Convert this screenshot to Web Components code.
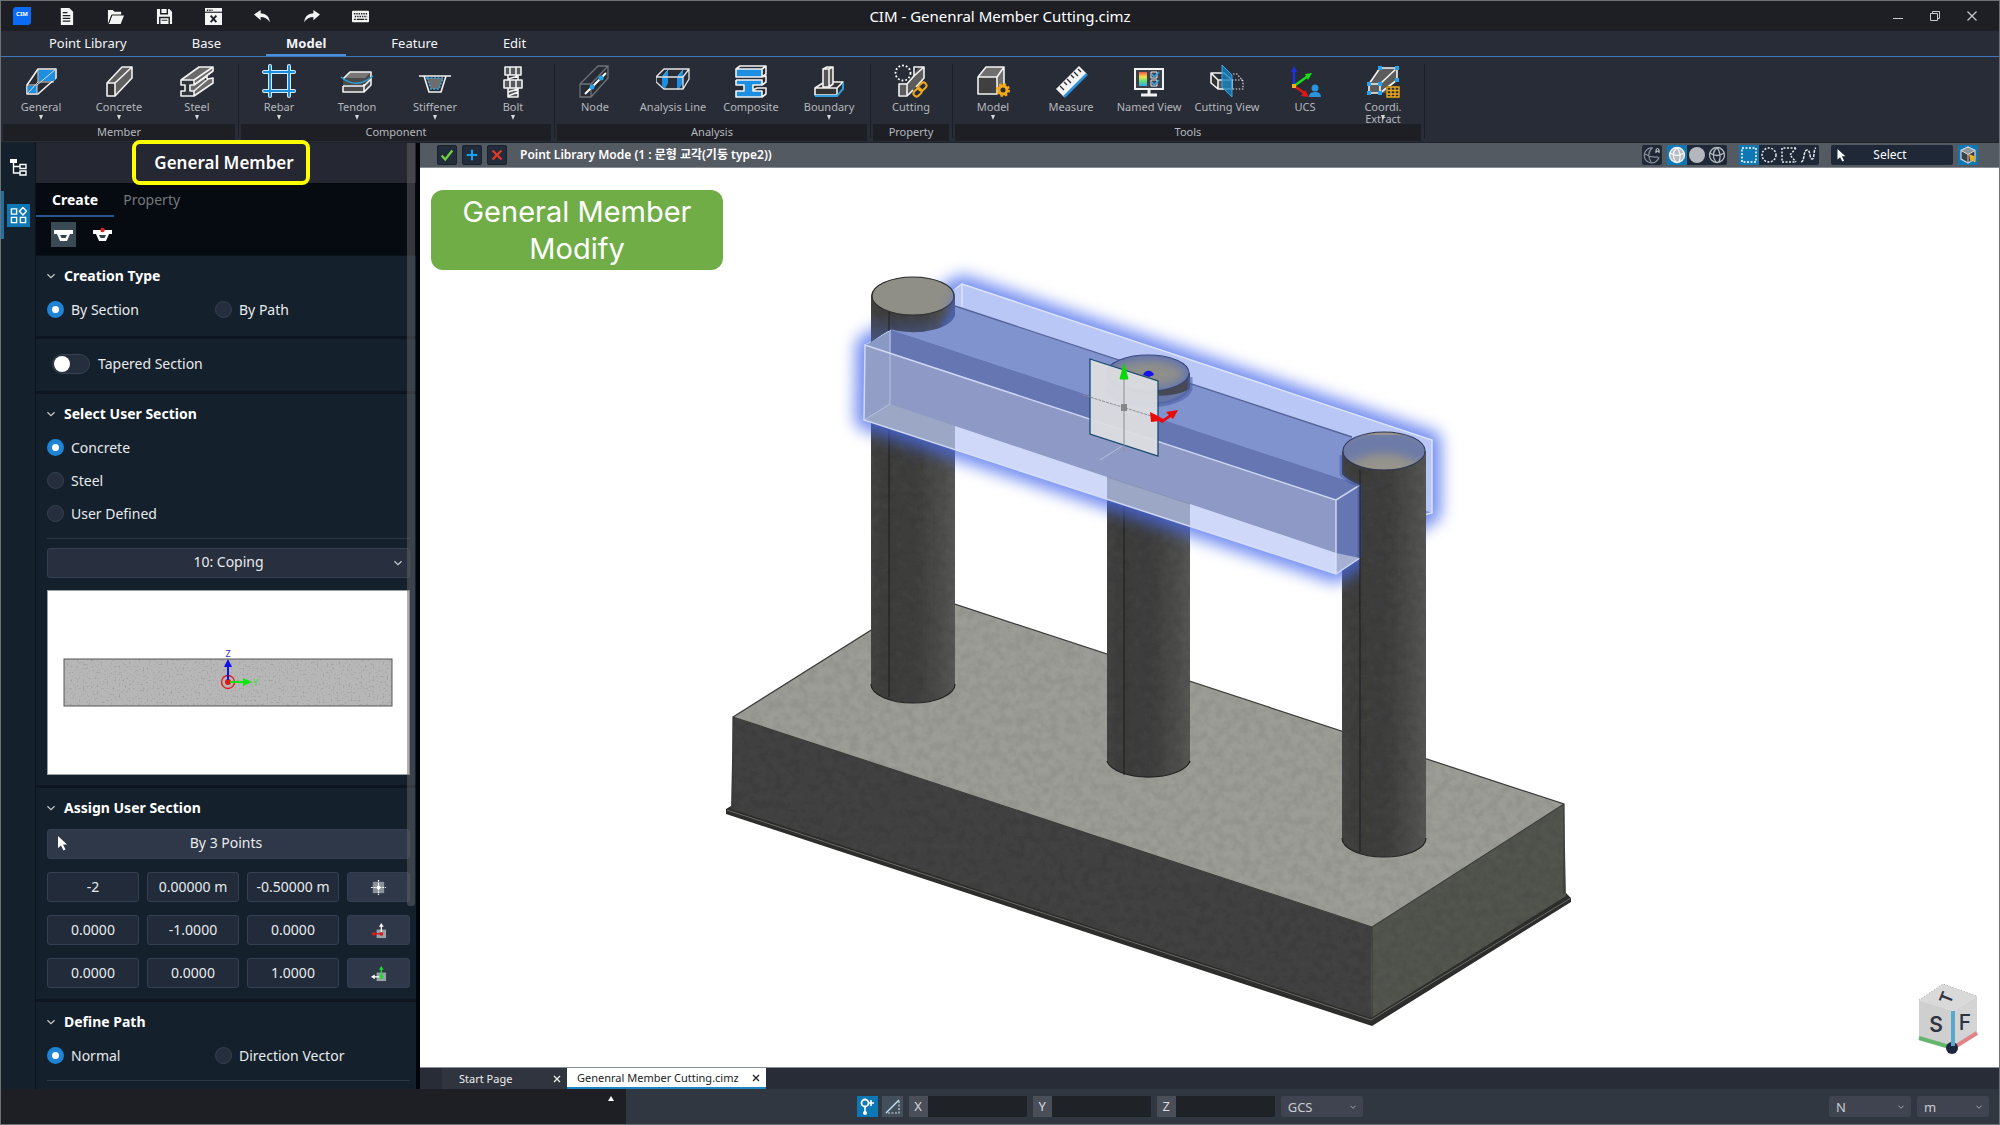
<!DOCTYPE html>
<html lang="en">
    <head>
        <meta charset="UTF-8"/>
        <title>CIM - Genenral Member Cutting.cimz</title>
        <style>
            html, body {
                margin: 0;
                height: 100%;
                background: #1e1f25;
            }
            body {
                font: 14px/20px "Noto Sans", "Noto Sans CJK KR", sans-serif;
                color: #f0f2f4;
            }
        </style>
    </head>
    <body>
        <!-- window frame: title, menu and ribbon on top, work area, status bar -->
        <template id="cim-window-temp">
            <style>
                :host {
                    display: flex;
                    flex-direction: column;
                    box-sizing: border-box;
                    height: 100vh;
                    border: 1px solid #6d7175;
                    overflow: hidden;
                }
                main {
                    display: flex;
                    flex: 1;
                    min-height: 0;
                    border-top: 1px solid #1d2129;
                }
                .work {
                    display: flex;
                    flex-direction: column;
                    flex: 1;
                    min-width: 0;
                }
            </style>
            <slot name="top"></slot>
            <main>
                <slot name="side"></slot>
                <div class="work"><slot></slot></div>
            </main>
            <slot name="bottom"></slot>
        </template>

        <template id="title-bar-temp">
            <style>
                :host {
                    display: grid;
                    grid-template-columns: 1fr auto 1fr;
                    align-items: center;
                    height: 30px;
                    background: #1e1f25;
                }
                .tools, .controls { display: flex; align-items: center; }
                .controls { justify-content: flex-end; padding-right: 9px; }
                .logo { width: 41px; display: flex; justify-content: center; }
                button {
                    display: flex;
                    justify-content: center;
                    width: 49px;
                    padding: 0;
                    border: 0;
                    background: none;
                    color: #f4f4f4;
                }
                .controls button { width: 37px; color: #c8cacc; }
                h1 { margin: 0; font-size: 15px; line-height: 20px; font-weight: 400; color: #fff; }
            </style>
            <div class="tools">
                <span class="logo"><cim-icon name="logo" size="18"></cim-icon></span>
                <button aria-label="New"><cim-icon name="doc" size="17"></cim-icon></button>
                <button aria-label="Open"><cim-icon name="open" size="17"></cim-icon></button>
                <button aria-label="Save"><cim-icon name="save" size="17"></cim-icon></button>
                <button aria-label="Close file"><cim-icon name="closefile" size="17"></cim-icon></button>
                <button aria-label="Undo"><cim-icon name="undo" size="17"></cim-icon></button>
                <button aria-label="Redo"><cim-icon name="redo" size="17"></cim-icon></button>
                <button aria-label="Keyboard"><cim-icon name="keyboard" size="17"></cim-icon></button>
            </div>
            <h1><slot></slot></h1>
            <div class="controls">
                <button aria-label="Minimize"><cim-icon name="min" size="12"></cim-icon></button>
                <button aria-label="Restore"><cim-icon name="restore" size="12"></cim-icon></button>
                <button aria-label="Close"><cim-icon name="close" size="12"></cim-icon></button>
            </div>
        </template>

        <template id="menu-bar-temp">
            <style>
                :host { display: block; background: #282c36; border-bottom: 1px solid #3d77b8; }
                nav { display: flex; gap: 25px; padding-left: 28px; height: 25px; }
                ::slotted(a) {
                    box-sizing: border-box;
                    height: 25px;
                    padding: 0 20px;
                    color: #f4f5f6;
                    font-size: 13px;
                    line-height: 25px;
                    text-decoration: none;
                }
                ::slotted(a[aria-current]) { font-weight: 700; border-bottom: 2px solid #4a8fd8; }
            </style>
            <nav><slot></slot></nav>
        </template>

        <template id="ribbon-bar-temp">
            <style>
                :host { display: flex; padding: 0 1px; background: #282c36; height: 85px; }
            </style>
            <slot></slot>
        </template>

        <template id="ribbon-group-temp">
            <style>
                :host { display: flex; }
                .tools { display: flex; height: 67px; }
                .name {
                    height: 17px;
                    margin: 0 1px;
                    background: #1e1f25;
                    color: #b4b7bc;
                    font-size: 11px;
                    line-height: 16px;
                    text-align: center;
                }
                .line { width: 1px; height: 74px; margin: 7px 1px 0 2px; background: #1b1e25; }
            </style>
            <div>
                <div class="tools"><slot></slot></div>
                <div class="name"></div>
            </div>
            <div class="line"></div>
        </template>

        <template id="ribbon-button-temp">
            <style>
                :host { display: block; }
                button {
                    position: relative;
                    display: flex;
                    flex-direction: column;
                    align-items: center;
                    gap: 3px;
                    width: 78px;
                    height: 67px;
                    padding: 7px 0 0;
                    border: 0;
                    background: none;
                    color: #b4b7bc;
                    font: 11px/12px "Noto Sans", sans-serif;
                    overflow: hidden;
                }
                .arrow { position: absolute; left: 37px; bottom: 4px; display: none; }
                :host([menu]) .arrow { display: block; }
                .arrow {
                    width: 0;
                    border: 2px solid transparent;
                    border-top: 5px solid #d8dadc;
                    border-bottom: 0;
                }
            </style>
            <button>
                <cim-icon size="34"></cim-icon>
                <span><slot></slot></span>
                <i class="arrow"></i>
            </button>
        </template>

        <template id="tool-rail-temp">
            <style>
                :host { display: flex; flex-direction: column; width: 34px; background: #14202c; }
                button {
                    display: flex;
                    align-items: center;
                    justify-content: center;
                    height: 48px;
                    padding: 0;
                    border: 0;
                    background: none;
                    color: #fff;
                }
                button.on { box-shadow: inset 3px 0 #1f6f9f; }
                .on cim-icon { background: #0e78b4; padding: 3px; }
            </style>
            <button aria-label="Tree"><cim-icon name="tree" size="18"></cim-icon></button>
            <button aria-label="Library" class="on"><cim-icon name="library" size="17"></cim-icon></button>
        </template>

        <template id="side-panel-temp">
            <style>
                :host {
                    position: relative;
                    display: block;
                    width: 380px;
                    border-left: 1px solid #0b131b;
                    border-right: 4px solid #02050a;
                    background: #14202c;
                }
                .clip { height: 100%; overflow: hidden; }
                header { display: flex; justify-content: center; height: 40px; padding-right: 4px; background: #252833; border-bottom: 1px solid #05090f; }
                h2 { margin: 0; font-size: 17px; line-height: 39px; font-weight: 600; color: #fff; }
                /* call-out frame round the panel title */
                .mark {
                    position: absolute;
                    left: 96px;
                    top: -3px;
                    box-sizing: border-box;
                    width: 178px;
                    height: 45px;
                    border: 4px solid #ffff00;
                    border-radius: 8px;
                    z-index: 2;
                }
                .scroll {
                    position: absolute;
                    right: 1px;
                    top: 0;
                    width: 8px;
                    height: 763px;
                    border-radius: 0 0 3px 3px;
                    background: rgba(100, 100, 102, .5);
                }
                .dark { background: #060b12; height: 72px; border-bottom: 1px solid #0b131b; box-sizing: border-box; }
                .tabs { display: flex; }
                .tabs button {
                    box-sizing: border-box;
                    height: 33px;
                    padding: 1px 9px 0;
                    border: 0;
                    border-bottom: 2px solid transparent;
                    background: none;
                    color: #74787d;
                    font: 14px/20px "Noto Sans", sans-serif;
                }
                .tabs .on { padding: 1px 16px 0; color: #fff; font-weight: 700; border-color: #2a5590; }
                .modes { display: flex; gap: 14px; padding: 5px 0 0 15px; }
                .modes button { padding: 3px; border: 0; background: none; color: #fff; }
                .modes .on { background: #3a4a54; }
                .modes cim-icon { vertical-align: top; }
            </style>
            <div class="clip">
                <header><h2></h2></header>
                <div class="dark">
                    <div class="tabs"><button class="on">Create</button><button>Property</button></div>
                    <div class="modes">
                        <button class="on" aria-label="Section"><cim-icon name="section" size="19"></cim-icon></button>
                        <button aria-label="Section point"><cim-icon name="sectionpoint" size="19"></cim-icon></button>
                    </div>
                </div>
                <slot></slot>
            </div>
            <div class="mark"></div>
            <div class="scroll"></div>
        </template>

        <template id="panel-section-temp">
            <style>
                :host { display: block; padding: 10px 6px 10px 11px; border-bottom: 3px solid #0c151e; }
                h3 { display: flex; align-items: center; gap: 9px; margin: 0 0 7px; font-size: 14px; line-height: 20px; font-weight: 700; color: #fff; }
                cim-icon { color: #c8ccd0; }
                ::slotted(.rule) { height: 1px; margin: 8px 0 9px; background: #2b3744; }
            </style>
            <h3><cim-icon name="chevron" size="8"></cim-icon><span></span></h3>
            <slot></slot>
        </template>

        <template id="radio-group-temp">
            <style>
                :host { display: grid; grid-template-columns: 1fr; }
                :host([columns="2"]) { grid-template-columns: 168px 1fr; }
                label { display: flex; align-items: center; gap: 7px; height: 33px; color: #e8eaec; }
                input {
                    appearance: none;
                    box-sizing: border-box;
                    width: 17px;
                    height: 17px;
                    margin: 0;
                    border: 1px solid #354150;
                    border-radius: 50%;
                    background: #252e3d;
                }
                input:checked { border: 5px solid #1f84d6; background: #fff; }
            </style>
        </template>

        <template id="toggle-switch-temp">
            <style>
                :host { display: block; padding: 15px 6px 17px 16px; border-bottom: 3px solid #0c151e; }
                label { display: flex; align-items: center; gap: 8px; color: #e8eaec; }
                input {
                    appearance: none;
                    box-sizing: border-box;
                    display: flex;
                    width: 38px;
                    height: 20px;
                    margin: 0;
                    padding: 1px;
                    border: 1px solid #354150;
                    border-radius: 10px;
                    background: #252e3d;
                }
                input::before { content: ""; width: 16px; height: 16px; border-radius: 50%; background: #fff; }
            </style>
            <label><input type="checkbox" role="switch"/><slot></slot></label>
        </template>

        <template id="section-picker-temp">
            <style>
                :host { display: block; }
                .pick { display: grid; align-items: center; margin-bottom: 12px; }
                .pick > * { grid-area: 1 / 1; }
                .pick cim-icon { justify-self: end; margin-right: 8px; color: #c8ccd0; pointer-events: none; }
                select {
                    appearance: none;
                    box-sizing: border-box;
                    width: 100%;
                    height: 30px;
                    padding: 0 4px 2px;
                    border: 1px solid #344052;
                    border-radius: 3px;
                    background: #283040;
                    color: #e8eaec;
                    font: 14px/20px "Noto Sans", sans-serif;
                    text-align-last: center;
                }
                svg { display: block; box-sizing: border-box; width: 100%; height: 185px; background: #fff; border: 1px solid #9a9fa4; }
            </style>
            <div class="pick">
                <select aria-label="Section"><option>10: Coping</option></select>
                <cim-icon name="chevron" size="8"></cim-icon>
            </div>
            <svg viewBox="1 1 361 183">
                <defs>
                    <filter id="grain" x="0" y="0" width="100%" height="100%">
                        <feTurbulence type="fractalNoise" baseFrequency=".5" numOctaves="3" seed="4"/>
                        <feColorMatrix values="0 0 0 0 .25  0 0 0 0 .25  0 0 0 0 .25  2 0 0 0 -1.05"/>
                        <feComposite in2="SourceGraphic" operator="in" result="n"/>
                        <feMerge><feMergeNode in="SourceGraphic"/><feMergeNode in="n"/></feMerge>
                    </filter>
                </defs>
                <rect x="17" y="69" width="328" height="47" fill="#b8b7b7" filter="url(#grain)"/>
                <rect x="17" y="69" width="328" height="47" fill="none" stroke="#555"/>
                <circle cx="181" cy="92" r="6.500" fill="none" stroke="#e01818" stroke-width="1.300"/>
                <circle cx="181" cy="92" r="3" fill="#e01818"/>
                <path d="M183 92H199" stroke="#0ee60e" stroke-width="2"/><path d="M196 88L205 92L196 96Z" fill="#0ee60e"/>
                <path d="M181 90V76" stroke="#1010e8" stroke-width="2"/><path d="M177 77L181 69L185 77Z" fill="#1010e8"/>
                <text x="181" y="67" font-size="9" text-anchor="middle" fill="#3030d0">Z</text>
                <text x="206" y="96" font-size="9" fill="#3fdc3f">Y</text>
            </svg>
        </template>

        <template id="point-form-temp">
            <style>
                :host { display: grid; grid-template-columns: repeat(3, 1fr) 63px; gap: 13px 8px; margin: 11px 0 1px; }
                input, button {
                    box-sizing: border-box;
                    width: 100%;
                    min-width: 0;
                    height: 30px;
                    border: 1px solid #344052;
                    border-radius: 3px;
                    background: #222b3a;
                    color: #e8eaec;
                    font: 14px/20px "Noto Sans", sans-serif;
                    text-align: center;
                    padding: 0 0 2px;
                }
                button { display: flex; align-items: center; justify-content: center; padding: 0; background: #2f3849; }
                .wide { grid-column: 1 / -1; display: grid; grid-template-columns: 16px 1fr 20px; padding: 0 7px 2px 6px; }
            </style>
            <button class="wide"><cim-icon name="cursor" size="16"></cim-icon><span>By 3 Points</span></button>
            <input aria-label="Origin X" value="-2"/>
            <input aria-label="Origin Y" value="0.00000 m"/>
            <input aria-label="Origin Z" value="-0.50000 m"/>
            <button aria-label="Pick origin"><cim-icon name="origin" size="17"></cim-icon></button>
            <input aria-label="Axis 1 X" value="0.0000"/>
            <input aria-label="Axis 1 Y" value="-1.0000"/>
            <input aria-label="Axis 1 Z" value="0.0000"/>
            <button aria-label="Pick first axis"><cim-icon name="axisred" size="17"></cim-icon></button>
            <input aria-label="Axis 2 X" value="0.0000"/>
            <input aria-label="Axis 2 Y" value="0.0000"/>
            <input aria-label="Axis 2 Z" value="1.0000"/>
            <button aria-label="Pick second axis"><cim-icon name="axisgreen" size="17"></cim-icon></button>
        </template>

        <template id="view-bar-temp">
            <style>
                :host { display: flex; align-items: center; gap: 5px; height: 25px; padding: 0 21px 0 17px; background: #545a62; border-bottom: 1px solid #8a8f95; box-sizing: border-box; }
                button { display: flex; padding: 0; border: 0; background: none; }
                .ok { border: 1px solid #18202c; border-radius: 2px; background: #232c3a; padding: 1px; }
                .name { flex: 1; padding-left: 8px; font-size: 12px; line-height: 20px; font-weight: 600; color: #fff; }
                .set { display: flex; height: 20px; border-radius: 2px; background: #1f2837; }
                .set .on, .cube { background: #0e78b4; }
                .shade { margin-right: 7px; }
                .shape { margin-right: 7px; }
                .mode { display: grid; grid-template-columns: 16px 1fr 20px; align-items: center; width: 122px; height: 20px; padding: 0 3px; border-radius: 2px; background: #1f2837; color: #fff; font: 12px/20px "Noto Sans", sans-serif; box-sizing: border-box; }
            </style>
            <button class="ok" aria-label="Apply"><cim-icon name="check" size="16"></cim-icon></button>
            <button class="ok" aria-label="Add"><cim-icon name="plus" size="16"></cim-icon></button>
            <button class="ok" aria-label="Cancel"><cim-icon name="cross" size="16"></cim-icon></button>
            <span class="name"><slot></slot></span>
            <span class="set"><button aria-label="Auto view"><cim-icon name="globeauto" size="20"></cim-icon></button></span>
            <span class="set shade">
                <button class="on" aria-label="Shaded with lines"><cim-icon name="globefull" size="20"></cim-icon></button>
                <button aria-label="Shaded"><cim-icon name="ball" size="20"></cim-icon></button>
                <button aria-label="Wireframe"><cim-icon name="globe" size="20"></cim-icon></button>
            </span>
            <span class="set shape">
                <button class="on" aria-label="Box select"><cim-icon name="selbox" size="20"></cim-icon></button>
                <button aria-label="Circle select"><cim-icon name="selcircle" size="20"></cim-icon></button>
                <button aria-label="Polygon select"><cim-icon name="selpoly" size="20"></cim-icon></button>
                <button aria-label="Line select"><cim-icon name="selline" size="20"></cim-icon></button>
            </span>
            <button class="mode"><cim-icon name="cursor" size="14"></cim-icon><span>Select</span></button>
            <button class="cube" aria-label="Solid pick"><cim-icon name="solid" size="20"></cim-icon></button>
        </template>

        <template id="model-view-temp">
            <style>
                :host { position: relative; display: block; flex: 1; min-height: 0; background: #fff; border-bottom: 1px solid #8a8f95; }
                svg { display: block; width: 100%; height: 100%; }
                .note {
                    position: absolute;
                    left: 11px;
                    top: 22px;
                    box-sizing: border-box;
                    width: 292px;
                    height: 80px;
                    padding: 3px 0;
                    border-radius: 12px;
                    background: #70ad47;
                    color: #fff;
                    font: 400 29px/37px Inter, sans-serif;
                    text-align: center;
                }
            </style>
            <svg viewBox="420 167 1579 899" aria-label="Pier model">
                <defs>
                    <filter id="glow" x="-10%" y="-20%" width="120%" height="140%"><feGaussianBlur stdDeviation="8"/></filter>
                    <filter id="soft" x="-30%" y="-30%" width="160%" height="160%"><feGaussianBlur stdDeviation="5"/></filter>
                    <filter id="grain" x="0" y="0" width="100%" height="100%">
                        <feTurbulence type="fractalNoise" baseFrequency=".12" numOctaves="4" seed="7"/>
                        <feColorMatrix values="0 0 0 0 0  0 0 0 0 0  0 0 0 0 0  .3 0 0 0 -.1"/>
                        <feComposite in2="SourceGraphic" operator="in" result="n"/>
                        <feMerge><feMergeNode in="SourceGraphic"/><feMergeNode in="n"/></feMerge>
                    </filter>
                    <linearGradient id="col">
                        <stop offset="0" stop-color="#444443"/><stop offset=".22" stop-color="#3e3e3d"/>
                        <stop offset=".6" stop-color="#424241"/><stop offset="1" stop-color="#575755"/>
                    </linearGradient>
                    <linearGradient id="neck" x2="0" y2="1">
                        <stop offset=".55" stop-color="#4a62b0" stop-opacity="0"/><stop offset="1" stop-color="#4a62b0" stop-opacity=".6"/>
                    </linearGradient>
                    <clipPath id="cap3"><ellipse cx="1384" cy="450" rx="41" ry="19"/></clipPath>
                    <clipPath id="cap2"><ellipse cx="1148" cy="372" rx="41" ry="18"/></clipPath>
                    <clipPath id="cap1"><path d="M871 295A42 19 0 0 1 955 295V312A42 19 0 0 1 890 328L871 341Z"/></clipPath>
                </defs>

                <!-- footing -->
                <path d="M726 808L731 805L1371 1014L1566 892L1571 897V901L1372 1025L726 813Z" fill="#2d2e2b"/>
                <path d="M727 809L1371 1019L1571 897" fill="none" stroke="#6a6b66"/>
                <path d="M733 716L1372 926L1371 1017L731 808Z" fill="#424242" filter="url(#grain)"/>
                <path d="M1372 926L1564 803L1566 895L1371 1017Z" fill="#535450" filter="url(#grain)"/>
                <path d="M733 716L927 594L1564 803L1372 926Z" fill="#9c9d96" filter="url(#grain)"/>
                <path d="M733 716L927 594L1564 803V893M1564 803L1372 926V1017M1372 926L733 716V808" fill="none" stroke="#3a3b38" stroke-width="1.200"/>

                <!-- piers -->
                <g filter="url(#grain)" fill="url(#col)">
                    <path d="M871 295V683A42 19 0 0 0 955 683V295Z"/>
                    <path d="M1107 372V760A42 19 0 0 0 1190 760V372Z"/>
                    <path d="M1342 450V837A42 19 0 0 0 1426 837V450Z"/>
                </g>
                <g fill="none" stroke="#222" stroke-width="1.200">
                    <path d="M889 330V696M1124 470V774M1360 560V851"/>
                    <path d="M871 683A42 19 0 0 0 955 683M1107 760A42 19 0 0 0 1190 760M1342 837A42 19 0 0 0 1426 837"/>
                </g>

                <!-- selection halo -->
                <path d="M865 344L890 329L962 283L1432 439V512L1360 557L1336 573L864 419Z" fill="#4a6cec" stroke="#4a6cec" stroke-width="18" stroke-linejoin="round" opacity=".78" filter="url(#glow)"/>

                <!-- coping, beam and its selection box -->
                <path d="M891 329L962 283L1432 439V512L1360 484Z" fill="#b9c7f6"/>
                <path d="M891 329L935 299L955 305L1352 436L1360 484Z" fill="#8193cf"/>
                <path d="M865 344L891 329L1360 484V557L1336 573L864 419Z" fill="#6676b3"/>
                <path d="M865 344L891 329L890 403L864 419Z" fill="#8a98c4"/>
                <path d="M865 344L1336 499V573L864 419Z" fill="#929ec6" opacity=".9"/>
                <path d="M955 425L1336 552V573L864 419L890 403Z" fill="#9ca7c6"/>
                <path d="M955 425L1107 476V498L955 449Z" fill="#cfd8f9"/>
                <path d="M1190 503L1336 552V573L1190 525Z" fill="#cfd8f9"/>
                <path d="M1107 476L1190 503" stroke="#8792b4"/>
                <path d="M1336 552L1360 557L1336 573Z" fill="#a5b0d2"/>
                <path d="M955 305L1352 436" stroke="#56659a" stroke-width="1.400"/>
                <path d="M864 419L890 403M890 403V330" stroke="#b4c0e6" fill="none"/>
                <g fill="none" stroke="#dbe3fd" stroke-width="1.500">
                    <path d="M865 344L1336 499V573L864 419ZM1336 499L1360 484M1336 573L1360 557" opacity=".85"/>
                    <path d="M955 288L962 283V306M962 283L1432 439V512L1424 514"/>
                </g>
                <path d="M865 344L891 329" stroke="#c2cdf2"/>

                <!-- pier heads -->
                <g filter="url(#grain)">
                    <path d="M871 295A42 19 0 0 1 955 295V312A42 19 0 0 1 890 328L871 341Z" fill="url(#col)"/>
                </g>
                <path d="M871 295A42 19 0 0 1 955 295V312A42 19 0 0 1 890 328L871 341Z" fill="url(#neck)"/>
                <ellipse cx="913" cy="295" rx="41" ry="19" fill="#8f8e87" stroke="#2f302e" stroke-width="1.200"/>
                <g clip-path="url(#cap1)"><path d="M962 275L940 330H962Z" fill="#4a6cf0" opacity=".6" filter="url(#soft)"/></g>
                <path d="M889 311V330" stroke="#222"/>

                <path d="M1107 372V388A42 19 0 0 0 1190 388V372Z" fill="#6676a8"/>
                <path d="M1130 390A42 19 0 0 0 1190 388V372L1150 380Z" fill="#474a55"/>
                <path d="M1107 388A42 19 0 0 0 1190 388V376" fill="none" stroke="#4d60a8" stroke-width="5" opacity=".6"/>
                <ellipse cx="1148" cy="372" rx="41" ry="18" fill="#8f8f8c" stroke="#37406a" stroke-width="1.200"/>
                <g clip-path="url(#cap2)"><ellipse cx="1148" cy="373" rx="44" ry="21" fill="none" stroke="#4462c4" stroke-width="14" opacity=".6" filter="url(#soft)"/></g>

                <g filter="url(#grain)">
                    <path d="M1342 450V473Q1348 480 1360 484V612H1426V450Z" fill="url(#col)"/>
                </g>
                <path d="M1342 454V473Q1348 480 1360 484V557" fill="none" stroke="#33488a" stroke-width="5" opacity=".4"/>
                <path d="M1360 469V612" stroke="#222"/>
                <ellipse cx="1384" cy="450" rx="41" ry="19" fill="#96948c" stroke="#2f3550" stroke-width="1.200"/>
                <g clip-path="url(#cap3)"><path d="M1342 460A41 19 0 0 1 1426 460" fill="none" stroke="#4462c4" stroke-width="24" opacity=".5" filter="url(#soft)"/></g>

                <!-- work plane -->
                <path d="M1090 358L1158 380V455L1090 433Z" fill="#dcdde0" fill-opacity=".95" stroke="#174a6e" stroke-width="1.300"/>
                <path d="M1124 370V451" stroke="#8b8e92"/>
                <path d="M1083 394L1158 417" stroke="#8b8e92" stroke-dasharray="3 1"/>
                <path d="M1122 445L1100 459" stroke="#b6bed8"/>
                <rect x="1121" y="403" width="6" height="7" fill="#85878a"/>
                <path d="M1124 363L1128 378H1120Z" fill="#08d808" stroke="#08d808"/>
                <path d="M1143 374A6 7 0 0 1 1154 374L1149 376Z" fill="#1414e6"/>
                <path d="M1150 411L1158 415L1163 418L1169 414L1166 411L1178 409L1173 418L1171 416L1162 422L1159 420L1151 421Z" fill="#ec0808"/>

                <!-- view cube -->
                <path d="M1919 999L1943 983L1977 995L1953 1010Z" fill="#d9d9da"/>
                <path d="M1919 999L1953 1010V1047L1919 1037Z" fill="#cfcfd0"/>
                <path d="M1977 995L1953 1010V1047L1977 1032Z" fill="#d4d4d5"/>
                <path d="M1919 999L1943 983L1977 995" fill="none" stroke="#aaa" stroke-dasharray="1 2"/>
                <path d="M1919 1037L1953 1047" stroke="#66b56c" stroke-width="4"/>
                <path d="M1953 1047L1977 1032" stroke="#e08488" stroke-width="4"/>
                <circle cx="1952" cy="1047" r="6" fill="#1d2740"/>
                <path d="M1953 1010V1045" stroke="#55a9cc" stroke-width="4"/>
                <g fill="#2e3340" font-family="Inter, sans-serif" font-weight="600" font-size="21" text-anchor="middle">
                    <text x="1936" y="1031">S</text>
                    <text x="1965" y="1029" font-weight="500">F</text>
                    <text font-size="17" transform="translate(1952 999) rotate(-68)">T</text>
                </g>
            </svg>
            <div class="note"><slot></slot></div>
        </template>

        <template id="doc-tabs-temp">
            <style>
                :host { display: flex; height: 21px; padding-left: 22px; background: #282c36; }
                .tab { display: flex; align-items: center; justify-content: space-between; box-sizing: border-box; width: 125px; padding: 0 6px 0 17px; background: #2f343e; }
                .tab.on { width: 199px; padding: 0 6px 0 10px; background: #fff; border-bottom: 2px solid #1a86c4; }
                .tab button { padding: 0; border: 0; background: none; color: #eee; font: 11px/18px "Noto Sans", sans-serif; }
                .tab.on button { color: #222; }
            </style>
            <div class="tab"><button>Start Page</button><button aria-label="Close Start Page"><cim-icon name="x" size="8"></cim-icon></button></div>
            <div class="tab on"><button>Genenral Member Cutting.cimz</button><button aria-label="Close file tab"><cim-icon name="x" size="8"></cim-icon></button></div>
        </template>

        <template id="status-bar-temp">
            <style>
                :host { display: flex; height: 35px; background: #313740; }
                .log { box-sizing: border-box; width: 625px; padding: 7px 12px; background: #1e1f25; text-align: right; }
                .log button { display: inline-block; width: 0; height: 0; padding: 0; border: 3px solid transparent; border-bottom: 5px solid #fff; border-top: 0; background: none; vertical-align: top; }
                .gap { flex: 1; }
                .gap.far { flex: 2; }
                .row { display: flex; align-items: flex-start; gap: 6px; padding: 7px 10px 0 0; }
                .row.mid { padding-right: 5px; }
                .row > button { display: flex; margin-right: -2px; padding: 0; border: 0; background: #0e78b4; }
                .row > button + button { margin-right: 0; background: #43505b; }
                label { display: flex; font-size: 13px; line-height: 21px; text-align: center; }
                label span { width: 19px; background: #494e59; color: #d8dadd; }
                input { box-sizing: border-box; width: 99px; height: 21px; border: 0; background: #1f2328; color: #fff; }
                .pick { display: grid; align-items: center; }
                .pick > * { grid-area: 1 / 1; }
                .pick cim-icon { justify-self: end; margin-right: 7px; color: #aeb3ba; pointer-events: none; }
                select { appearance: none; width: 82px; height: 21px; padding: 0 7px; border: 0; border-radius: 2px; background: #3f4450; color: #c9ccd2; font: 13px/20px "Noto Sans", sans-serif; }
                .short select { width: 72px; }
            </style>
            <div class="log"><button aria-label="Expand log"></button></div>
            <div class="gap"></div>
            <div class="row mid">
                <button aria-label="Snap"><cim-icon name="snap" size="21"></cim-icon></button>
                <button aria-label="Ortho"><cim-icon name="ortho" size="21"></cim-icon></button>
                <label><span>X</span><input/></label>
                <label><span>Y</span><input/></label>
                <label><span>Z</span><input/></label>
                <div class="pick"><select aria-label="Coordinate system"><option>GCS</option></select><cim-icon name="chevron" size="6"></cim-icon></div>
            </div>
            <div class="gap far"></div>
            <div class="row">
                <div class="pick"><select aria-label="Force unit"><option>N</option></select><cim-icon name="chevron" size="6"></cim-icon></div>
                <div class="pick short"><select aria-label="Length unit"><option>m</option></select><cim-icon name="chevron" size="6"></cim-icon></div>
            </div>
        </template>

        <cim-window>
            <title-bar slot="top">CIM - Genenral Member Cutting.cimz</title-bar>
            <menu-bar slot="top">
                <a href="#library">Point Library</a>
                <a href="#base">Base</a>
                <a href="#model" aria-current="page">Model</a>
                <a href="#feature">Feature</a>
                <a href="#edit">Edit</a>
            </menu-bar>
            <ribbon-bar slot="top">
                <ribbon-group name="Member">
                    <ribbon-button icon="general" menu>General</ribbon-button>
                    <ribbon-button icon="concrete" menu>Concrete</ribbon-button>
                    <ribbon-button icon="steel" menu>Steel</ribbon-button>
                </ribbon-group>
                <ribbon-group name="Component">
                    <ribbon-button icon="rebar" menu>Rebar</ribbon-button>
                    <ribbon-button icon="tendon" menu>Tendon</ribbon-button>
                    <ribbon-button icon="stiffener" menu>Stiffener</ribbon-button>
                    <ribbon-button icon="bolt" menu>Bolt</ribbon-button>
                </ribbon-group>
                <ribbon-group name="Analysis">
                    <ribbon-button icon="node">Node</ribbon-button>
                    <ribbon-button icon="analysis">Analysis Line</ribbon-button>
                    <ribbon-button icon="composite">Composite</ribbon-button>
                    <ribbon-button icon="boundary" menu>Boundary</ribbon-button>
                </ribbon-group>
                <ribbon-group name="Property">
                    <ribbon-button icon="cutting">Cutting</ribbon-button>
                </ribbon-group>
                <ribbon-group name="Tools">
                    <ribbon-button icon="model" menu>Model</ribbon-button>
                    <ribbon-button icon="measure">Measure</ribbon-button>
                    <ribbon-button icon="named">Named View</ribbon-button>
                    <ribbon-button icon="cutview">Cutting View</ribbon-button>
                    <ribbon-button icon="ucs">UCS</ribbon-button>
                    <ribbon-button icon="extract" menu>Coordi.<br/>Extract</ribbon-button>
                </ribbon-group>
            </ribbon-bar>

            <tool-rail slot="side"></tool-rail>
            <side-panel slot="side" heading="General Member">
                <panel-section heading="Creation Type">
                    <radio-group columns="2" options="By Section,By Path"></radio-group>
                </panel-section>
                <toggle-switch>Tapered Section</toggle-switch>
                <panel-section heading="Select User Section">
                    <radio-group options="Concrete,Steel,User Defined"></radio-group>
                    <div class="rule"></div>
                    <section-picker></section-picker>
                </panel-section>
                <panel-section heading="Assign User Section">
                    <point-form></point-form>
                </panel-section>
                <panel-section heading="Define Path">
                    <radio-group columns="2" options="Normal,Direction Vector"></radio-group>
                    <div class="rule"></div>
                </panel-section>
            </side-panel>

            <view-bar>Point Library Mode (1 : 문형 교각(기둥 type2))</view-bar>
            <model-view>General Member<br/>Modify</model-view>
            <doc-tabs></doc-tabs>

            <status-bar slot="bottom"></status-bar>
        </cim-window>

        <script>
            // icon drawings: [view box size, markup]
            const W = 'fill="none" stroke="#f2f2f2" stroke-width="1.600" stroke-linejoin="round"';
            const GLOBE = '<circle cx="10" cy="10" r="7.500"/><path d="M3 8Q10 13 17 8M10 2.500Q3 9 9 17.500M10 2.500Q15 9 12 17"/>';
            const SECTION = '<path d="M0 5H19V9H16L13 16H6L3 9H0Z" fill="#fff"/><path d="M6 10H13L11.500 13H7.500Z" fill="#33424c"/>';
            const ICONS = {
                logo: [18, '<path d="M2 0H18V16L16 18H0V2Z" fill="#0a6cf2"/><text x="9" y="9" font-size="6" font-weight="700" font-family="Noto Sans" text-anchor="middle" fill="#fff">CIM</text>'],
                doc: [18, '<path d="M3 0H12L16 4V18H3Z" fill="#f4f4f4"/><path d="M5 5H10M5 8H13M5 11H13M5 14H13" stroke="#1e1f25" stroke-width="1.300"/>'],
                open: [18, '<path d="M1 17V2H6L8 4H15V7H5Z" fill="#f4f4f4"/><path d="M5.500 8H18L14.500 17H2Z" fill="#f4f4f4"/><path d="M5 7.500L2 16" stroke="#1e1f25"/>'],
                save: [18, '<path d="M1 1H14L17 4V17H1Z" fill="#f4f4f4"/><path d="M5 1V6H12V1M4 17V10H14V17" fill="none" stroke="#1e1f25" stroke-width="1.500"/><path d="M6 13H12" stroke="#1e1f25"/>'],
                closefile: [18, '<path d="M0 0H18V18H0Z" fill="#f4f4f4"/><path d="M0 4.500H18" stroke="#1e1f25" stroke-width="1.200"/><path d="M2 2.300H8" stroke="#1e1f25" stroke-width="1.500" stroke-dasharray="1.500 1"/><path d="M6 8L12 15M12 8L6 15" stroke="#1e1f25" stroke-width="2"/>'],
                undo: [18, '<path d="M0 7L7 2V5.500Q16 6 17 15Q13 9.500 7 9.500V13Z" fill="#f4f4f4"/>'],
                redo: [18, '<path d="M18 7L11 2V5.500Q2 6 1 15Q5 9.500 11 9.500V13Z" fill="#f4f4f4"/>'],
                keyboard: [18, '<rect y="3" width="18" height="12" rx="1" fill="#f4f4f4"/><path d="M2 6H16M3 9H16" stroke="#1e1f25" stroke-width="1.600" stroke-dasharray="1.500 1"/><path d="M2 12H4M5 12H13M14 12H16" stroke="#1e1f25" stroke-width="1.500"/>'],
                min: [12, '<path d="M1 8.500H11" stroke="currentColor"/>'],
                restore: [12, '<path d="M1.500 3.500H8.500V10.500H1.500ZM3.500 3V1.500H10.500V8.500H9" fill="none" stroke="currentColor"/>'],
                close: [12, '<path d="M1.500 1.500L10.500 10.500M10.500 1.500L1.500 10.500" stroke="currentColor" stroke-width="1.200"/>'],
                x: [8, '<path d="M1 1L7 7M7 1L1 7" stroke="currentColor" stroke-width="1.300"/>'],
                chevron: [9, '<path d="M.5 2.500L4.500 6.500L8.500 2.500" fill="none" stroke="currentColor" stroke-width="1.300"/>'],
                cursor: [16, '<path d="M4 1V13L7 10.500L9.500 15.500L11.500 14.500L9 9.500H13Z" fill="#fff"/>'],
                tree: [18, '<path d="M1 1H8V5H1Z" fill="#fff"/><path d="M4.500 5V15H11M4.500 8.500H11M11 6.500H17V10.500H11ZM11 13H17V17H11Z" fill="none" stroke="#fff" stroke-width="1.400"/>'],
                library: [18, '<path d="M1.500 2H7V7.500H1.500ZM1.500 11H7V16.500H1.500ZM11 11H16.500V16.500H11ZM13.700 .5L17.500 4.500L13.700 8.500L10 4.500Z" fill="none" stroke="#fff" stroke-width="1.500"/>'],
                section: [19, SECTION],
                sectionpoint: [19, SECTION + '<circle cx="9.500" cy="5" r="2.200" fill="#e02020"/>'],
                origin: [18, '<path d="M3 3H15V15H3Z" fill="#8b929c"/><path d="M9 1V17M1 9H17" stroke="#fff" stroke-width="1.300" stroke-dasharray="2 1"/><circle cx="9" cy="9" r="2" fill="#fff"/>'],
                axisred: [18, '<path d="M7 8H17V17H7Z" fill="#9aa0a8"/><path d="M12 12V4" stroke="#fff" stroke-width="1.400"/><path d="M9.500 5L12 1L14.500 5Z" fill="#fff"/><path d="M12 12.500H4" stroke="#d81c1c" stroke-width="1.600"/><path d="M5 10L1 12.500L5 15Z" fill="#d81c1c"/><circle cx="12" cy="12.500" r="2" fill="#d81c1c"/>'],
                axisgreen: [18, '<path d="M7 8H17V17H7Z" fill="#9aa0a8"/><path d="M12 12V4" stroke="#19dc28" stroke-width="1.600"/><path d="M9.500 5L12 1L14.500 5Z" fill="#19dc28"/><path d="M12 12.500H4" stroke="#fff" stroke-width="1.400"/><path d="M5 10L1 12.500L5 15Z" fill="#fff"/><circle cx="12" cy="12.500" r="2.200" fill="#19dc28"/>'],
                check: [18, '<path d="M3 9.500L7 14L15 4" fill="none" stroke="#6fd044" stroke-width="2.600"/>'],
                plus: [18, '<path d="M9 3V15M3 9H15" stroke="#18a0ee" stroke-width="2.400"/>'],
                cross: [18, '<path d="M4 4L14 14M14 4L4 14" stroke="#e33a28" stroke-width="2.600"/>'],
                globeauto: [20, '<g fill="none" stroke="#8c929b" stroke-width="1.200"><path d="M11 3A7.500 7.500 0 1 0 17 12M3 9Q9 13 16 12M10 3Q4 9 9 17"/></g><path d="M14 8V4.500Q15.500 2.500 17 4.500V8M14 6.200H17" fill="none" stroke="#ddd"/>'],
                globefull: [20, '<g fill="#b7bcc2" stroke="#f4f4f4" stroke-width="1.300">' + GLOBE + '</g>'],
                ball: [20, '<circle cx="10" cy="10" r="8" fill="#b4b8be"/>'],
                globe: [20, '<g fill="none" stroke="#b4b8be" stroke-width="1.300">' + GLOBE + '</g>'],
                selbox: [20, '<path d="M3 3H17V17H3Z" fill="none" stroke="#fff" stroke-width="1.500" stroke-dasharray="2 1.500"/>'],
                selcircle: [20, '<circle cx="10" cy="10" r="7" fill="none" stroke="#e8e8e8" stroke-width="1.500" stroke-dasharray="2 1.500"/>'],
                selpoly: [20, '<path d="M17 3H3V17H17M17 3L11 10L17 17" fill="none" stroke="#e8e8e8" stroke-width="1.500" stroke-dasharray="2 1.500"/>'],
                selline: [20, '<path d="M2 17C6 17 4 5 8 5S10 14 13 14S14 4 17 3" fill="none" stroke="#e8e8e8" stroke-width="1.500" stroke-dasharray="3 1"/>'],
                solid: [20, '<path d="M10 2L17 5.500V14L10 18L3 14V5.500Z" fill="#3a3f46" stroke="#c9ccd0" stroke-width="1.300"/><path d="M10 9.500L3 5.500L10 2L17 5.500Z" fill="#8e949c" stroke="#d8dadd"/><path d="M10 9.500V18" stroke="#c9ccd0"/><path d="M11 9L18 12L15.500 13L18 16L16.500 17.500L14 14.500L12.500 16.500Z" fill="#f3b21c"/>'],
                snap: [21, '<circle cx="8" cy="7" r="3.500" fill="none" stroke="#fff" stroke-width="1.800"/><path d="M8 11V17M11 7H17M14 4V10" stroke="#fff" stroke-width="1.600"/><circle cx="8" cy="17" r="2" fill="#fff"/>'],
                ortho: [21, '<path d="M4 17L17 4" stroke="#bfe0f4" stroke-width="1.500"/><path d="M17 5V17H4" fill="none" stroke="#cdd3d8" stroke-width="1.200" stroke-dasharray="2 1.500"/>'],
                general: [34, `<path d="M14 5H32V14L14 30H3V21Z" ${W}/><path d="M14.500 6H31V16L29 17H14.500Z" fill="#1c8fe3"/><path d="M3.500 22H13V29H3.500Z" fill="#1c8fe3"/><path d="M14 5V18H30M3 21H13V30M13 21L32 5M14 18L3 30" fill="none" stroke="#dcdcdc"/>`],
                concrete: [34, `<path d="M20 3H30V14L13 32H5V19Z" fill="#606060"/><path d="M5 19H13V32H5Z" fill="#333"/><path d="M20 3H30V14L13 32H5V19ZM5 19H13V32M13 19L30 3" ${W}/>`],
                steel: [34, `<path d="M1 16L19 3H33V8L25 14V17L33 14V19L14 32H1V27H5V21H1Z" fill="#6a6a6a"/><path d="M1 16H14V21H10V27H14V32H1V27H5V21H1Z" fill="#30343c"/><path d="M1 16L19 3H33V7L14 21H10V27H14V32H1V27H5V21H1V16H14V21M14 16L33 3M14 27L28 15L33 14V19L14 32M14 21L27 12V15" ${W}/>`],
                rebar: [34, '<g stroke="#d5ecfb" stroke-width="4" stroke-linecap="round"><path d="M8 2V32M27 2V32M2 8H32M2 27H32"/></g><g stroke="#1c8fe3" stroke-width="2" stroke-linecap="round"><path d="M8 2V32M27 2V32M2 8H32M2 27H32"/></g>'],
                tendon: [34, `<path d="M3 14L10 8H31V21L24 28H3Z" fill="#4b4b4b"/><path d="M10 8H31L25 14H3Z" fill="#777"/><path d="M3 15L10 8H31V21L24 28H3V22M24 20V28M3 22H24L31 15" ${W}/><path d="M1 13Q16 26 33 12" fill="none" stroke="#2ba0d8" stroke-width="1.500"/>`],
                stiffener: [34, `<path d="M1 12H33M6 12L11 28H23L28 12" ${W}/><path d="M9 14H25L21 25H13Z" fill="#6d6d6d" stroke="#35a9e8" stroke-width="1.500" stroke-dasharray="2 1.500"/>`],
                bolt: [34, `<path d="M9 3H25V11H9ZM12 11V16M22 11V16M12 15L22 12M8 16H26V24H8ZM12 24V33H22V24M12 28L22 25M12 32L22 28" fill="#55585c"/><path d="M9 3H25V11H9ZM14 3V11M20 3V11M12 11V16M22 11V16M12 15L22 12M8 16H26V24H8ZM14 16V24M20 16V24M12 24V33H22V24M12 28L22 25M12 32L22 28" ${W}/>`],
                node: [34, '<path d="M2 20L20 2H30V14L13 33H2ZM2 20H13V33M13 20L30 2" fill="none" stroke="#6e7178" stroke-width="1.300"/><path d="M7 30L28 9" stroke="#fff" stroke-width="2"/><circle cx="14" cy="23" r="2.500" fill="#25a4ea"/><circle cx="23" cy="14" r="2.500" fill="#25a4ea"/>'],
                analysis: [34, `<path d="M6 13L12 6V19L9 25L6 22ZM21 13L27 6V19L23 25L21 25Z" fill="#1c8fe3"/><path d="M0 13L8 5H33V15L27 25H8L0 18ZM0 13H27L33 5M27 13V25" fill="none" stroke="#e4e4e4" stroke-width="1.300"/><path d="M6 13L12 6M21 13L27 6" stroke="#5cc0f4"/>`],
                composite: [34, `<path d="M2 5H28V13H2ZM2 16H28V21H19V27H28V33H2V27H10V21H2Z" fill="#1c8fe3"/><path d="M2 5L6 2H32V10L28 13H2V5H28V13M28 5L32 2M2 16H28V21H19V27H28V33H2V27H10V21H2V16M28 13L32 12V18L28 21M19 26L23 24H32V30L28 33" ${W}/>`],
                boundary: [34, `<path d="M3 23L12 17H31L26 24V32H3Z" fill="#333"/><path d="M11 5L15 3H21V20L17 23H11Z" fill="#555"/><path d="M11 5L15 3H21V20L17 23H11ZM11 5H17V23M17 5L21 3M11 19L3 24V31H25V24H3M21 18H31L25 24" ${W}/><path d="M3 32H25L31 25V19" fill="none" stroke="#2ba0e0" stroke-width="2"/>`],
                cutting: [34, `<path d="M5 19H13L25 3H30V13L16 31H5Z" fill="#5c5c5c"/><path d="M5 20H13V32H5ZM13 20L20 12V3H30V14L22 23M20 12L30 3M13 32L19 26" ${W}/><circle cx="9" cy="9" r="7.500" fill="none" stroke="#fff" stroke-width="1.800" stroke-dasharray="1.800 2"/><g fill="none" stroke="#eda91a" stroke-width="2"><rect x="24" y="20" width="9" height="6" rx="3" transform="rotate(-45 28 23)"/><rect x="19" y="25" width="9" height="6" rx="3" transform="rotate(-45 24 28)"/></g>`],
                model: [34, `<path d="M2 13L10 3H28V23L21 30H2Z" fill="#6e6e6e"/><path d="M2 13H21V30H2Z" fill="#404040"/><path d="M2 13L10 3H28V22L21 30H2V13H21V30M21 13L28 3" ${W}/><circle cx="27" cy="26" r="4" fill="#282c36" stroke="#f5a914" stroke-width="3"/><circle cx="27" cy="26" r="6" fill="none" stroke="#f5a914" stroke-width="2" stroke-dasharray="2.400 2.300"/>`],
                measure: [34, '<path d="M2 25L25 2L33 10L10 33Z" fill="#f4f4f4"/><path d="M10 33L33 10" stroke="#2b93dc" stroke-width="2.500"/><path d="M6 22L10 26M10 18L13 21M13 15L17 19M17 11L20 14M20 8L24 12M24 5L27 8" stroke="#282c36" stroke-width="1.300"/>'],
                named: [34, '<defs><linearGradient id="r" x2="0" y2="1"><stop offset="0" stop-color="#f0554a"/><stop offset=".35" stop-color="#f2e24a"/><stop offset=".65" stop-color="#5fe07a"/><stop offset="1" stop-color="#3aa8f0"/></linearGradient></defs><rect x="3" y="5" width="28" height="20" fill="#3c4048" stroke="#f2f2f2" stroke-width="2"/><rect x="7" y="8" width="8" height="14" fill="url(#r)"/><path d="M19 8H25V14H19ZM19 16H25V22H19Z" fill="none" stroke="#e8e8e8"/><path d="M20 10L22 13L27 8M20 18L22 21L27 16" fill="none" stroke="#38a4e4" stroke-width="1.500"/><path d="M17 25V30M9 31H25" stroke="#f2f2f2" stroke-width="3"/>'],
                cutview: [34, `<path d="M1 10L8 16V25L1 19Z" fill="#333"/><path d="M8 16H22V25H8Z" fill="#555"/><path d="M1 9H14L22 16V25H8L1 19ZM1 9L8 16H22M8 16V25" ${W}/><path d="M23 10H27L33 17V25H22M22 16H33" fill="none" stroke="#e0e0e0" stroke-width="1.200" stroke-dasharray="1.500 1.500"/><path d="M12 1L22 11V33L12 23Z" fill="#1780bd" fill-opacity=".8" stroke="#3aa6e2"/>`],
                ucs: [34, '<path d="M6 22V6" stroke="#1c32e0" stroke-width="2.500"/><path d="M3 8L6 2L9 8Z" fill="#1c32e0"/><path d="M6 22L20 12" stroke="#16e016" stroke-width="2.500"/><path d="M17 10L24 9L20 16Z" fill="#16e016"/><path d="M6 22L18 30" stroke="#e01616" stroke-width="2.500"/><path d="M17 26L21 33L13 32Z" fill="#e01616"/><rect x="4" y="20" width="4" height="4" fill="#f6b01a"/><circle cx="27" cy="24" r="3.500" fill="#2b93dc"/><path d="M21 33Q21 28 27 28T33 33Z" fill="#2b93dc"/>'],
                extract: [34, `<path d="M3 20L14 4H31V16L19 29H3Z" fill="#5c5c5c"/><path d="M3 20L14 4H31V16L14 29H3V20H14V29M14 20L31 4" ${W}/><path d="M12 2H16V6H12ZM29 2H33V6H29ZM29 14H33V18H29ZM1 18H5V22H1ZM12 18H16V22H12ZM1 27H5V31H1ZM12 27H16V31H12Z" fill="#23a3ee"/><rect x="20" y="22" width="14" height="12" fill="#282c36"/><path d="M21 23H33V33H21ZM21 26.500H33M21 30H33M25 23V33M29 23V33" fill="none" stroke="#eda91a" stroke-width="1.400"/>`]
            };

            function stamp(element) {
                const template = document.getElementById(element.localName + "-temp");
                const root = element.attachShadow({mode: "open"});
                root.appendChild(template.content.cloneNode(true));
                return root;
            }

            customElements.define(
                "cim-icon",
                class extends HTMLElement {
                    connectedCallback() {
                        if (!this.shadowRoot) {
                            this.attachShadow({mode: "open"});
                        }
                        this.draw();
                    }
                    static get observedAttributes() {
                        return ["name"];
                    }
                    attributeChangedCallback() {
                        if (this.shadowRoot) {
                            this.draw();
                        }
                    }
                    draw() {
                        const icon = ICONS[this.getAttribute("name")];
                        if (!icon) {
                            return;
                        }
                        const size = this.getAttribute("size");
                        this.shadowRoot.innerHTML = `
                            <style>:host { display: inline-block; } svg { display: block; }</style>
                            <svg width="${size}" height="${size}" viewBox="0 0 ${icon[0]} ${icon[0]}" aria-hidden="true">${icon[1]}</svg>`;
                    }
                }
            );

            // elements that only need their template
            for (const name of ["cim-window", "title-bar", "menu-bar", "ribbon-bar", "tool-rail", "toggle-switch",
                "section-picker", "point-form", "view-bar", "model-view", "doc-tabs", "status-bar"]) {
                customElements.define(name, class extends HTMLElement {
                    constructor() {
                        super();
                        stamp(this);
                    }
                });
            }

            customElements.define(
                "ribbon-group",
                class extends HTMLElement {
                    constructor() {
                        super();
                        stamp(this).querySelector(".name").textContent = this.getAttribute("name");
                    }
                }
            );

            customElements.define(
                "ribbon-button",
                class extends HTMLElement {
                    constructor() {
                        super();
                        stamp(this).querySelector("cim-icon").setAttribute("name", this.getAttribute("icon"));
                    }
                }
            );

            customElements.define(
                "side-panel",
                class extends HTMLElement {
                    constructor() {
                        super();
                        stamp(this).querySelector("h2").textContent = this.getAttribute("heading");
                    }
                }
            );

            customElements.define(
                "panel-section",
                class extends HTMLElement {
                    constructor() {
                        super();
                        stamp(this).querySelector("h3 span").textContent = this.getAttribute("heading");
                    }
                }
            );

            customElements.define(
                "radio-group",
                class extends HTMLElement {
                    constructor() {
                        super();
                        const root = stamp(this);
                        this.getAttribute("options").split(",").forEach((text, index) => {
                            const label = document.createElement("label");
                            const input = document.createElement("input");
                            input.type = "radio";
                            input.name = "choice";
                            input.checked = index === 0;
                            label.append(input, text);
                            root.appendChild(label);
                        });
                    }
                }
            );
        </script>
    </body>
</html>
